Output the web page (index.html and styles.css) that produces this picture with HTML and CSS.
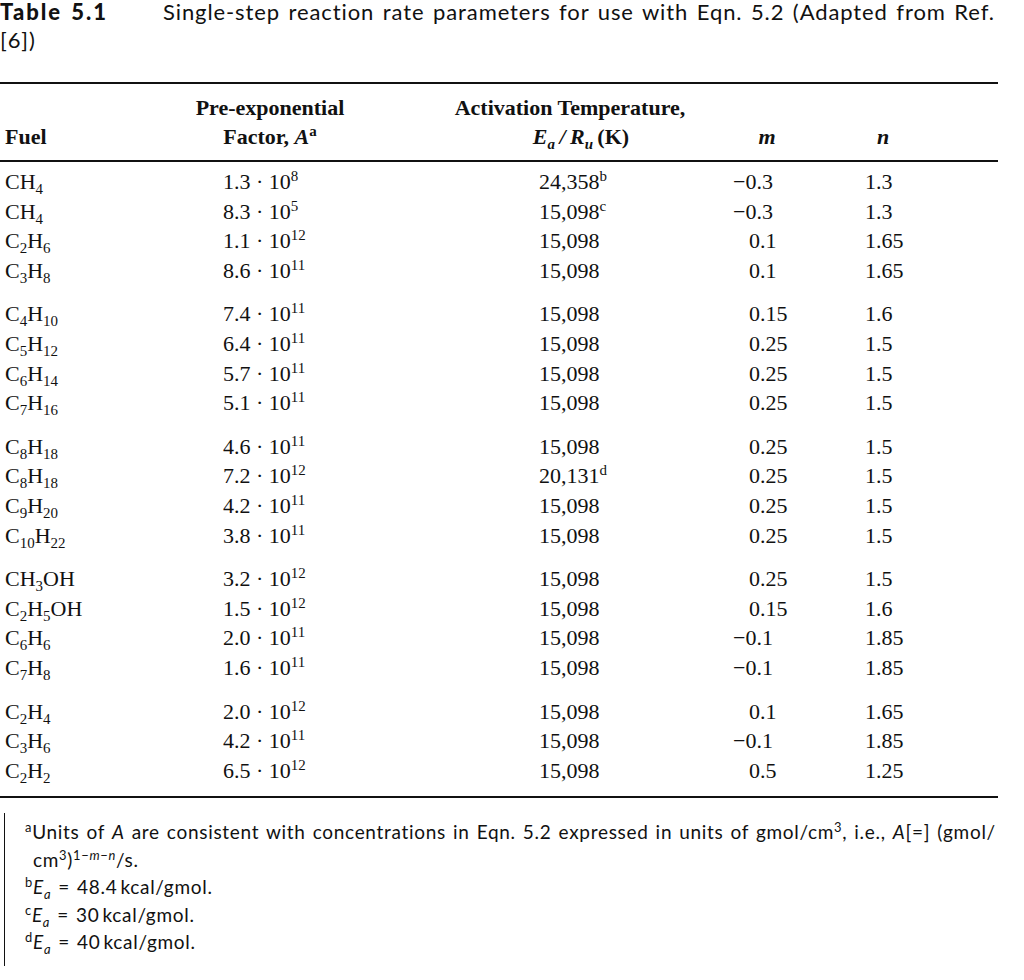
FILE: index.html
```html
<!DOCTYPE html>
<html lang="en">
<head>
    <meta charset="UTF-8">
    <meta name="viewport" content="width=device-width, initial-scale=1.0">
    <title>Table 5.1 - Single-step reaction rate parameters</title>
    <link rel="stylesheet" href="styles.css">
</head>
<body>
    <div class="page">
        <p class="caption"><span class="label">Table 5.1</span>Single-step reaction rate parameters for use with Eqn. 5.2 (Adapted from Ref.<br>[6])</p>

        <table class="rates">
            <colgroup>
                <col class="c-fuel">
                <col class="c-a">
                <col class="c-ea">
                <col class="c-m">
                <col class="c-n">
            </colgroup>
            <thead>
                <tr>
                    <th class="fuel">Fuel</th>
                    <th class="h-a">Pre-exponential<br>Factor, <i>A</i><sup>a</sup></th>
                    <th class="h-ea">Activation Temperature,<br><span class="ratio"><i>E<sub>a</sub></i>&thinsp;<i>/</i>&thinsp;<i>R<sub>u</sub></i>&thinsp;(K)</span></th>
                    <th class="h-m"><i>m</i></th>
                    <th class="h-n"><i>n</i></th>
                </tr>
            </thead>
            <tbody>
                <tr><td>CH<sub>4</sub></td><td class="a">1.3 · 10<sup>8</sup></td><td class="ea">24,358<sup>b</sup></td><td class="m"><span class="minus">−</span>0.3</td><td class="n">1.3</td></tr>
                <tr><td>CH<sub>4</sub></td><td class="a">8.3 · 10<sup>5</sup></td><td class="ea">15,098<sup>c</sup></td><td class="m"><span class="minus">−</span>0.3</td><td class="n">1.3</td></tr>
                <tr><td>C<sub>2</sub>H<sub>6</sub></td><td class="a">1.1 · 10<sup>12</sup></td><td class="ea">15,098</td><td class="m">0.1</td><td class="n">1.65</td></tr>
                <tr><td>C<sub>3</sub>H<sub>8</sub></td><td class="a">8.6 · 10<sup>11</sup></td><td class="ea">15,098</td><td class="m">0.1</td><td class="n">1.65</td></tr>
            </tbody>
            <tbody>
                <tr><td>C<sub>4</sub>H<sub>10</sub></td><td class="a">7.4 · 10<sup>11</sup></td><td class="ea">15,098</td><td class="m">0.15</td><td class="n">1.6</td></tr>
                <tr><td>C<sub>5</sub>H<sub>12</sub></td><td class="a">6.4 · 10<sup>11</sup></td><td class="ea">15,098</td><td class="m">0.25</td><td class="n">1.5</td></tr>
                <tr><td>C<sub>6</sub>H<sub>14</sub></td><td class="a">5.7 · 10<sup>11</sup></td><td class="ea">15,098</td><td class="m">0.25</td><td class="n">1.5</td></tr>
                <tr><td>C<sub>7</sub>H<sub>16</sub></td><td class="a">5.1 · 10<sup>11</sup></td><td class="ea">15,098</td><td class="m">0.25</td><td class="n">1.5</td></tr>
            </tbody>
            <tbody>
                <tr><td>C<sub>8</sub>H<sub>18</sub></td><td class="a">4.6 · 10<sup>11</sup></td><td class="ea">15,098</td><td class="m">0.25</td><td class="n">1.5</td></tr>
                <tr><td>C<sub>8</sub>H<sub>18</sub></td><td class="a">7.2 · 10<sup>12</sup></td><td class="ea">20,131<sup>d</sup></td><td class="m">0.25</td><td class="n">1.5</td></tr>
                <tr><td>C<sub>9</sub>H<sub>20</sub></td><td class="a">4.2 · 10<sup>11</sup></td><td class="ea">15,098</td><td class="m">0.25</td><td class="n">1.5</td></tr>
                <tr><td>C<sub>10</sub>H<sub>22</sub></td><td class="a">3.8 · 10<sup>11</sup></td><td class="ea">15,098</td><td class="m">0.25</td><td class="n">1.5</td></tr>
            </tbody>
            <tbody>
                <tr><td>CH<sub>3</sub>OH</td><td class="a">3.2 · 10<sup>12</sup></td><td class="ea">15,098</td><td class="m">0.25</td><td class="n">1.5</td></tr>
                <tr><td>C<sub>2</sub>H<sub>5</sub>OH</td><td class="a">1.5 · 10<sup>12</sup></td><td class="ea">15,098</td><td class="m">0.15</td><td class="n">1.6</td></tr>
                <tr><td>C<sub>6</sub>H<sub>6</sub></td><td class="a">2.0 · 10<sup>11</sup></td><td class="ea">15,098</td><td class="m"><span class="minus">−</span>0.1</td><td class="n">1.85</td></tr>
                <tr><td>C<sub>7</sub>H<sub>8</sub></td><td class="a">1.6 · 10<sup>11</sup></td><td class="ea">15,098</td><td class="m"><span class="minus">−</span>0.1</td><td class="n">1.85</td></tr>
            </tbody>
            <tbody>
                <tr><td>C<sub>2</sub>H<sub>4</sub></td><td class="a">2.0 · 10<sup>12</sup></td><td class="ea">15,098</td><td class="m">0.1</td><td class="n">1.65</td></tr>
                <tr><td>C<sub>3</sub>H<sub>6</sub></td><td class="a">4.2 · 10<sup>11</sup></td><td class="ea">15,098</td><td class="m"><span class="minus">−</span>0.1</td><td class="n">1.85</td></tr>
                <tr><td>C<sub>2</sub>H<sub>2</sub></td><td class="a">6.5 · 10<sup>12</sup></td><td class="ea">15,098</td><td class="m">0.5</td><td class="n">1.25</td></tr>
            </tbody>
        </table>

        <div class="notes">
            <p class="note-a"><sup>a</sup>Units of <i>A</i> are consistent with concentrations in Eqn. 5.2 expressed in units of gmol/cm<sup>3</sup>, i.e., <i>A</i>[=] (gmol/<br>cm<sup>3</sup>)<sup>1−<i>m</i>−<i>n</i></sup>/s.</p>
            <p><sup>b</sup><i>E<sub>a</sub></i> = 48.4&thinsp;kcal/gmol.</p>
            <p><sup>c</sup><i>E<sub>a</sub></i> = 30&thinsp;kcal/gmol.</p>
            <p><sup>d</sup><i>E<sub>a</sub></i> = 40&thinsp;kcal/gmol.</p>
        </div>
    </div>
</body>
</html>
```

FILE: styles.css
```css
body {
    margin: 0;
    background: #ffffff;
    color: #111111;
}
.page {
    width: 1000px;
}
.caption {
    font-family: Lato, "Liberation Sans", sans-serif;
    font-size: 22px;
    letter-spacing: 0.9px;
    word-spacing: 2px;
    line-height: 28px;
    margin: -2px 0 28px 0;
}
.label {
    display: inline-block;
    width: 163px;
    font-weight: 900;
    letter-spacing: 2px;
}
.rates {
    width: 998px;
    table-layout: fixed;
    border-collapse: collapse;
    font-family: "Liberation Serif", serif;
    font-size: 22px;
    border-top: 2px solid #111;
    border-bottom: 2px solid #111;
}
.c-fuel { width: 190px; }
.c-a { width: 250px; }
.c-ea { width: 280px; }
.c-m { width: 120px; }
.c-n { width: 158px; }
.rates th {
    font-weight: bold;
    line-height: 29px;
    vertical-align: bottom;
    text-align: center;
    padding: 9px 0 9px 0;
    border-bottom: 2px solid #111;
}
.rates th.fuel {
    text-align: left;
    padding-left: 5px;
}
.rates .h-a { padding-right: 90px; }
.rates .h-ea { padding-right: 20px; }
.rates .h-m { padding-right: 26px; }
.rates .h-n { padding-right: 72px; }
.ratio {
    margin-left: 22px;
}
.rates td {
    padding: 0;
    line-height: 29.6px;
    white-space: nowrap;
}
.rates td:first-child {
    padding-left: 5px;
}
.rates td.a { padding-left: 33px; }
.rates td.ea { padding-left: 99px; }
.rates td.m { padding-left: 29px; }
.rates td.n { padding-left: 25px; }
.rates tbody:first-of-type tr:first-child td {
    padding-top: 5px;
}
.rates tbody + tbody tr:first-child td {
    padding-top: 14px;
}
.rates tbody:last-of-type tr:last-child td {
    padding-bottom: 11px;
}
.minus {
    margin-left: -0.73em;
}
sup, sub {
    line-height: 0;
    font-size: 0.68em;
}
.notes {
    font-family: Lato, "Liberation Sans", sans-serif;
    font-size: 19px;
    letter-spacing: 0.7px;
    word-spacing: 1.5px;
    line-height: 27.5px;
    margin: 15px 0 0 4px;
    padding: 5px 0 10px 20px;
    border-left: 1.5px solid #111;
}
.notes p {
    margin: 0;
}
.notes .note-a {
    padding-left: 8px;
    text-indent: -8px;
}
```
